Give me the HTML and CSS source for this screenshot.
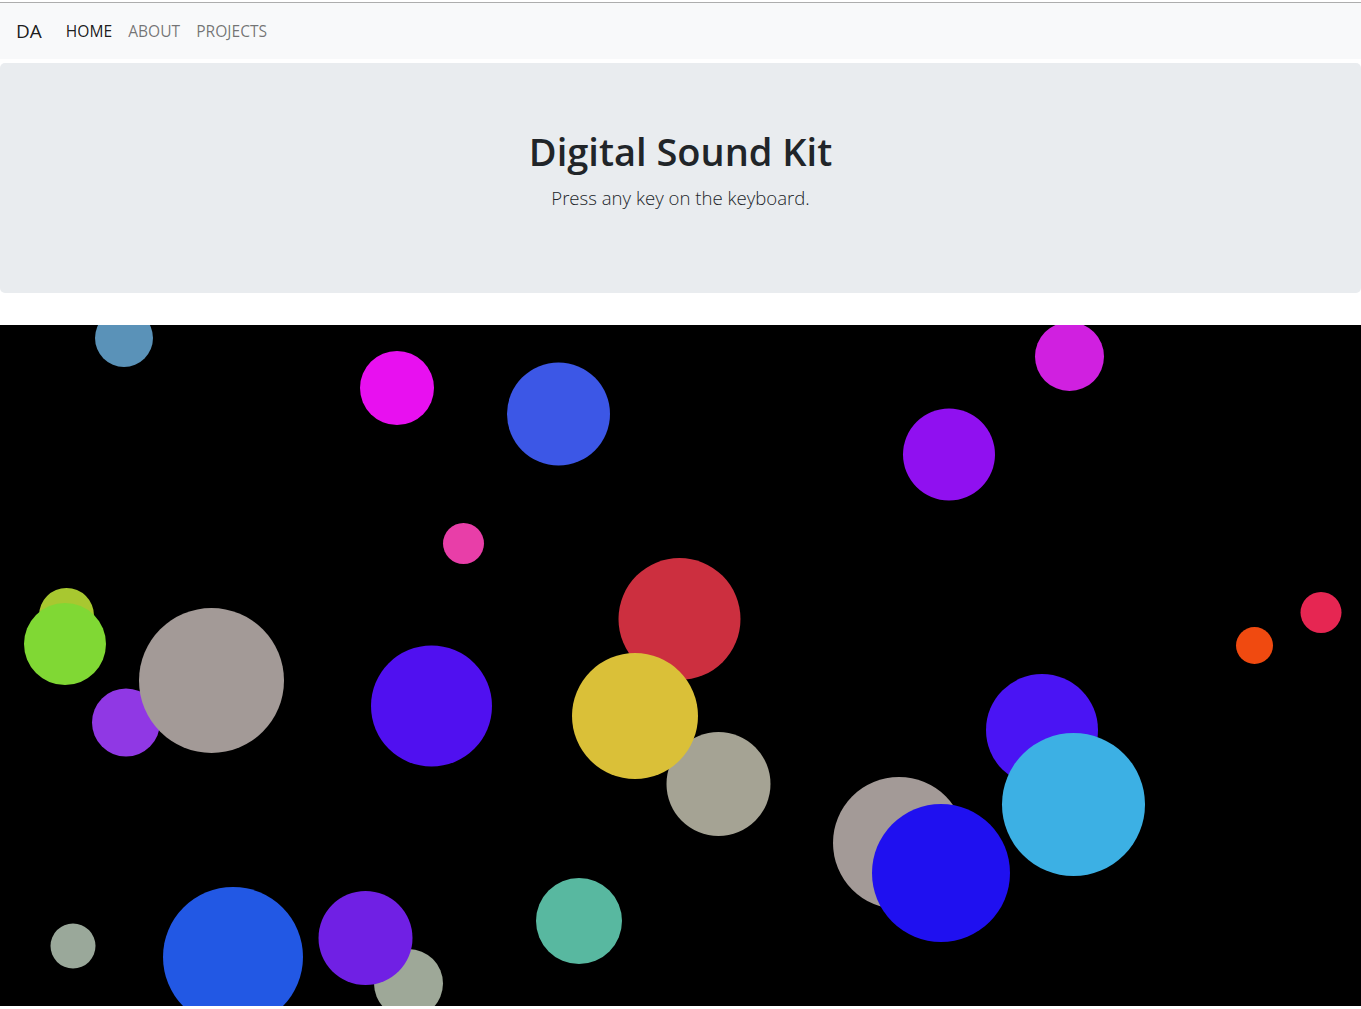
FILE: index.html
```html
<!DOCTYPE html>
<html lang="en">
<head>
<meta charset="utf-8">
<title>Digital Sound Kit</title>
<link rel="stylesheet" href="styles.css">
</head>
<body>
<nav class="navbar">
  <a class="brand" href="#">DA</a>
  <ul class="nav">
    <li><a class="nav-link active" href="#">Home</a></li>
    <li><a class="nav-link" href="#">About</a></li>
    <li><a class="nav-link" href="#">Projects</a></li>
  </ul>
</nav>
<header class="jumbotron">
  <h1 class="title">Digital Sound Kit</h1>
  <p class="lead">Press any key on the keyboard.</p>
</header>
<main class="stage">
  <svg class="canvas" viewBox="0 0 1361 681" preserveAspectRatio="none" xmlns="http://www.w3.org/2000/svg">
    <rect width="1361" height="681" fill="#000"/>
    <circle cx="124" cy="13" r="29" fill="#5a92b8"/>
    <circle cx="397" cy="63" r="37" fill="#e810f0"/>
    <circle cx="558.5" cy="89" r="51.5" fill="#3c57e6"/>
    <circle cx="1069.5" cy="31.5" r="34.5" fill="#d020e0"/>
    <circle cx="949" cy="129.5" r="46" fill="#9010f0"/>
    <circle cx="463.5" cy="218.5" r="20.5" fill="#e83ea8"/>
    <circle cx="1321" cy="287.5" r="20.5" fill="#e62652"/>
    <circle cx="1254.5" cy="320.5" r="18.5" fill="#f04a10"/>
    <circle cx="66.5" cy="290.5" r="27.5" fill="#a8c830"/>
    <circle cx="65" cy="319" r="41" fill="#80d834"/>
    <circle cx="126" cy="397.5" r="34" fill="#9038e4"/>
    <circle cx="211.5" cy="355.5" r="72.5" fill="#a39a97"/>
    <circle cx="431.5" cy="381" r="60.5" fill="#5010f0"/>
    <circle cx="679.5" cy="294" r="61" fill="#cc2f3f"/>
    <circle cx="718.5" cy="459" r="52" fill="#a5a394"/>
    <circle cx="635" cy="391" r="63" fill="#dac038"/>
    <circle cx="1042" cy="405" r="56" fill="#4a14f4"/>
    <circle cx="1073.5" cy="479.5" r="71.5" fill="#3cb0e4"/>
    <circle cx="899" cy="518" r="66" fill="#a39a97"/>
    <circle cx="941" cy="548" r="69" fill="#1f10f0"/>
    <circle cx="73" cy="621" r="22.5" fill="#9aa89a"/>
    <circle cx="233" cy="632" r="70" fill="#2258e4"/>
    <circle cx="408.5" cy="658.5" r="34.5" fill="#9ea898"/>
    <circle cx="365.5" cy="613" r="47" fill="#7020e4"/>
    <circle cx="579" cy="596" r="43" fill="#58b8a0"/>
  </svg>
</main>
</body>
</html>
```
FILE: styles.css
```css
* {
  box-sizing: border-box;
}

html, body {
  margin: 0;
  padding: 0;
}

body {
  padding-top: 2px;
  font-family: "Open Sans", "Noto Sans", sans-serif;
  font-size: 16px;
  line-height: 1.5;
  color: #212529;
  background: #fff;
  overflow: hidden;
}

.navbar {
  display: flex;
  align-items: center;
  height: 57px;
  padding: 8px 16px;
  border-top: 1px solid #adadad;
  background: #f8f9fa;
}

.brand {
  font-size: 19px;
  color: rgba(0, 0, 0, 0.9);
  text-decoration: none;
  margin-right: 16px;
  line-height: 30px;
}

.nav {
  display: flex;
  list-style: none;
  margin: 0;
  padding: 0;
}

.nav-link {
  display: block;
  padding: 8px;
  font-size: 15.6px;
  text-transform: uppercase;
  color: rgba(0, 0, 0, 0.55);
  text-decoration: none;
  line-height: 24px;
}

.nav-link.active {
  color: rgba(0, 0, 0, 0.9);
}

.jumbotron {
  margin-top: 4px;
  margin-bottom: 32px;
  padding: 64px 32px;
  background: #e9ecef;
  border-radius: 5px;
  text-align: center;
  height: 230px;
}

.title {
  margin: 0 0 8px;
  font-size: 38px;
  font-weight: 600;
  line-height: 48px;
}

.lead {
  margin: 0;
  font-size: 18.6px;
  font-weight: 300;
  line-height: 30px;
}

.stage {
  height: 681px;
}

.canvas {
  display: block;
  width: 100%;
  height: 681px;
}
```
